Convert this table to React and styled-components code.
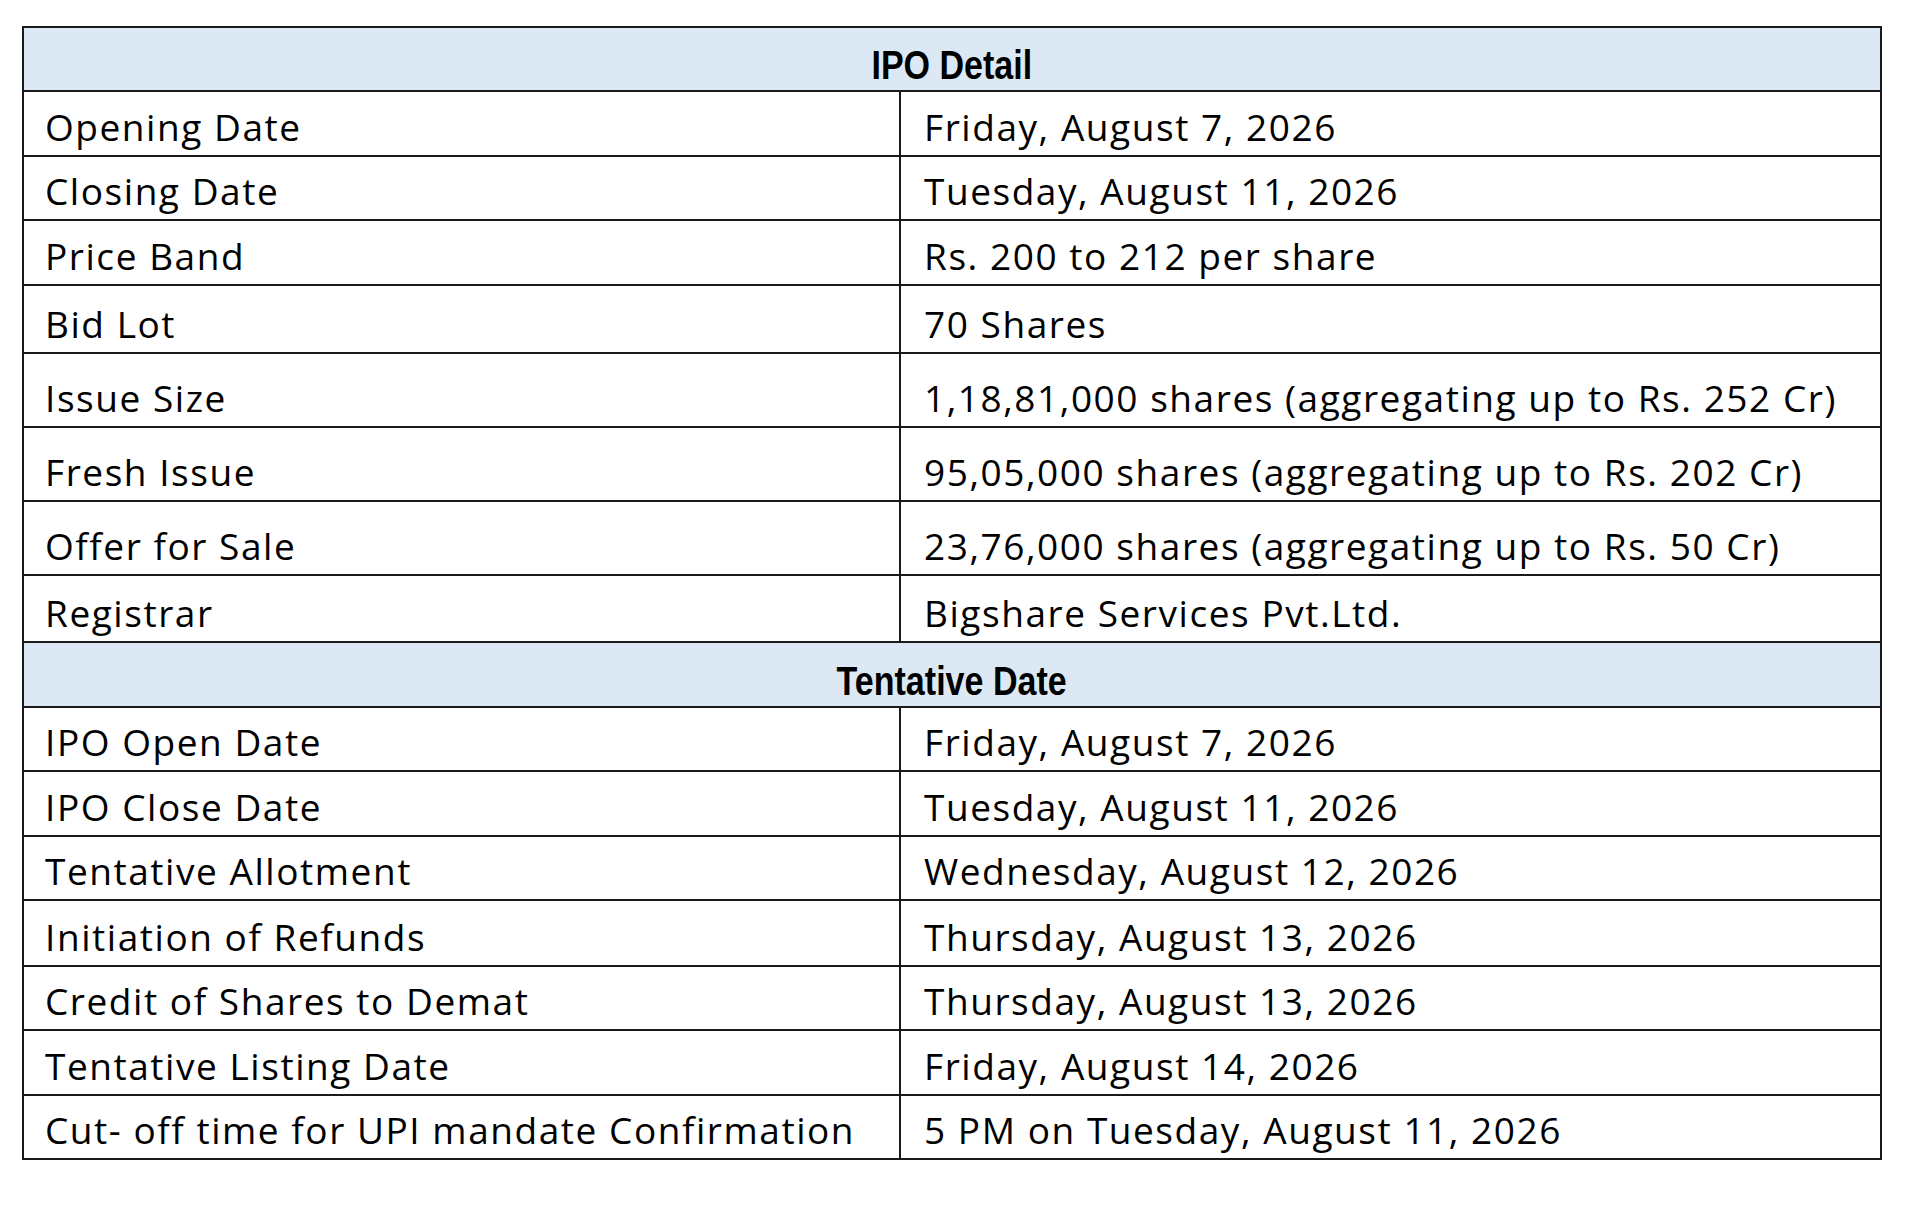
import React from "react";
import styled, { createGlobalStyle } from "styled-components";

const Global = createGlobalStyle`
  html, body { margin: 0; padding: 0; background: #ffffff; }
  body { font-family: "Open Sans", "Liberation Sans", sans-serif; color: #000; }
`;

const Page = styled.div`
  padding: 26px 0 0 22px;
`;

const Table = styled.table`
  border-collapse: collapse;
  width: 1858px;
  table-layout: fixed;
`;

const SectionCell = styled.th`
  background: #dce9f5;
  border: 2px solid #1a1a1a;
  height: ${(p) => p.$pitch - 3}px;
  padding: 0 0 1px 0;
  vertical-align: bottom;
  text-align: center;
  font-family: "Liberation Sans", Arial, sans-serif;
  font-weight: 700;
  font-size: 41px;
  line-height: 47px;
  color: #000;
`;

const SectionTitle = styled.span`
  display: inline-block;
  vertical-align: bottom;
  transform: scaleX(0.83);
`;

const Cell = styled.td`
  border: 2px solid #1a1a1a;
  height: ${(p) => p.$pitch - 5}px;
  padding: 0 0 3px ${(p) => (p.$right ? 23 : 21)}px;
  vertical-align: bottom;
  font-size: 37px;
  line-height: 50px;
  letter-spacing: 1.55px;
  white-space: nowrap;
  color: #000;
`;

const sections = [
  {
    title: "IPO Detail",
    pitch: 64,
    rows: [
      ["Opening Date", "Friday, August 7, 2026", 65],
      ["Closing Date", "Tuesday, August 11, 2026", 64],
      ["Price Band", "Rs. 200 to 212 per share", 65],
      ["Bid Lot", "70 Shares", 68],
      ["Issue Size", "1,18,81,000 shares (aggregating up to Rs. 252 Cr)", 74],
      ["Fresh Issue", "95,05,000 shares (aggregating up to Rs. 202 Cr)", 74],
      ["Offer for Sale", "23,76,000 shares (aggregating up to Rs. 50 Cr)", 74],
      ["Registrar", "Bigshare Services Pvt.Ltd.", 67],
    ],
  },
  {
    title: "Tentative Date",
    pitch: 65,
    rows: [
      ["IPO Open Date", "Friday, August 7, 2026", 64],
      ["IPO Close Date", "Tuesday, August 11, 2026", 65],
      ["Tentative Allotment", "Wednesday, August 12, 2026", 64],
      ["Initiation of Refunds", "Thursday, August 13, 2026", 66],
      ["Credit of Shares to Demat", "Thursday, August 13, 2026", 64],
      ["Tentative Listing Date", "Friday, August 14, 2026", 65],
      ["Cut- off time for UPI mandate Confirmation", "5 PM on Tuesday, August 11, 2026", 64],
    ],
  },
];

export default function App() {
  return (
    <>
      <Global />
      <Page>
        <Table>
          <colgroup>
            <col style={{ width: 877 }} />
            <col style={{ width: 981 }} />
          </colgroup>
          <tbody>
            {sections.map((s) => (
              <React.Fragment key={s.title}>
                <tr>
                  <SectionCell colSpan={2} $pitch={s.pitch}>
                    <SectionTitle>{s.title}</SectionTitle>
                  </SectionCell>
                </tr>
                {s.rows.map(([k, v, pitch]) => (
                  <tr key={k}>
                    <Cell $pitch={pitch}>{k}</Cell>
                    <Cell $pitch={pitch} $right>
                      {v}
                    </Cell>
                  </tr>
                ))}
              </React.Fragment>
            ))}
          </tbody>
        </Table>
      </Page>
    </>
  );
}
